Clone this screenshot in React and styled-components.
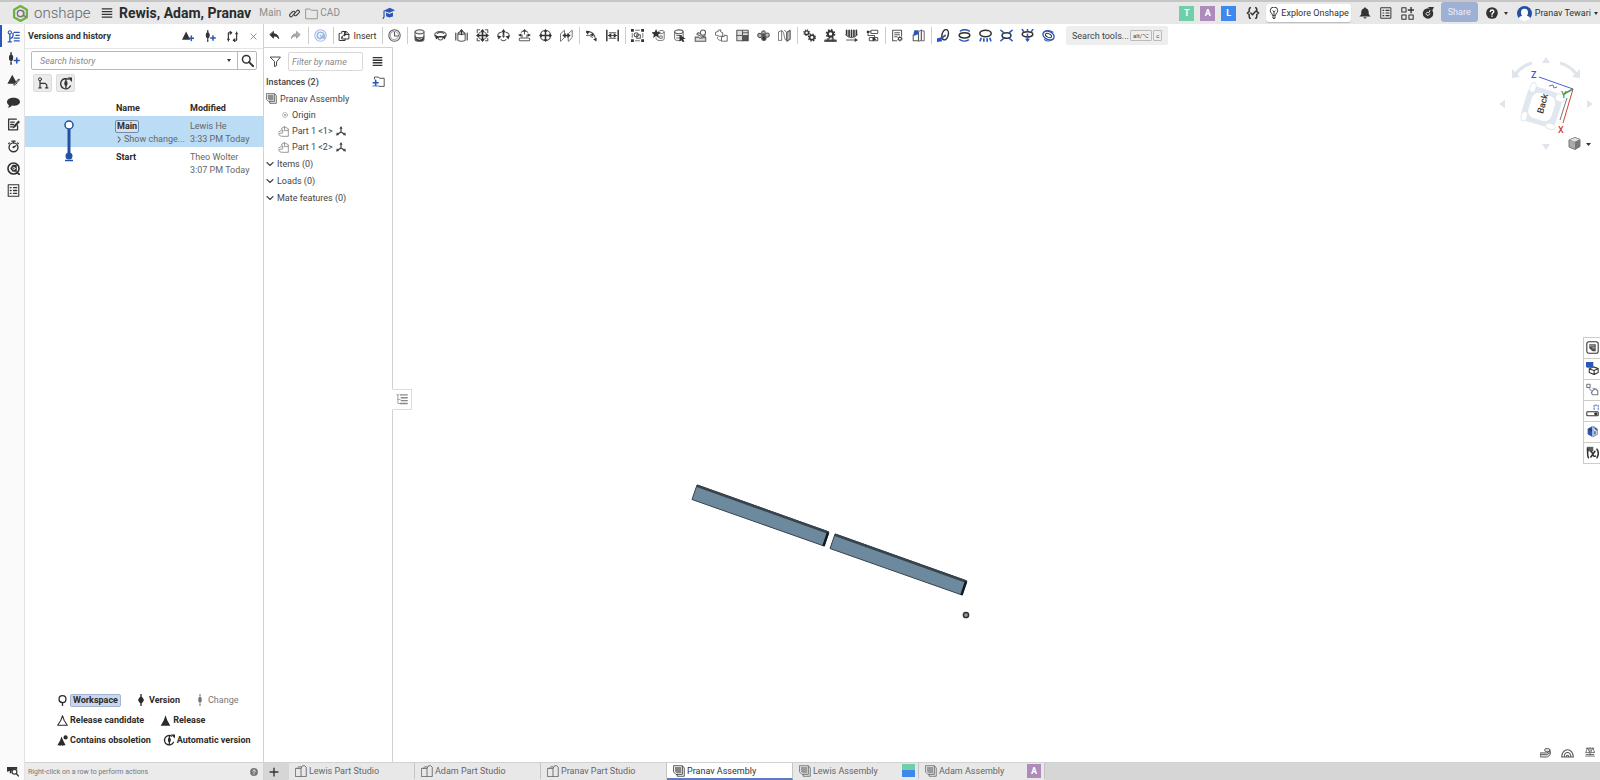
import React from "react";
import styled, { createGlobalStyle } from "styled-components";

const GlobalStyle = createGlobalStyle`
  * {
    box-sizing: border-box;
  }
  body {
    margin: 0;
    background: #fff;
    color: #333;
    font-family: Roboto, "Liberation Sans", sans-serif;
    font-size: 9px;
    line-height: 14px;
  }
  button, input {
    font: inherit;
    color: inherit;
  }
`;

/* ---------- icons ---------- */

const Glyph = styled.svg.attrs((props) => ({
  viewBox: props.viewBox || "0 0 16 16",
  "aria-hidden": true,
}))`
  flex: none;
  display: block;
  width: ${(props) => props.$size || 13}px;
  height: ${(props) => props.$size || 13}px;
  fill: none;
  stroke: currentColor;
  stroke-width: 1.3;
  stroke-linecap: round;
  stroke-linejoin: round;
  .f {
    fill: currentColor;
  }
  .s {
    fill: currentColor;
    stroke: none;
  }
  .b {
    stroke: #2a56b8;
  }
  .bf {
    fill: #2a56b8;
    stroke: none;
  }
  .g {
    fill: #bbb;
  }
  .d {
    stroke: currentColor;
  }
`;

const gear = (x, y, r) => (
  <g className="d">
    <circle cx={x} cy={y} r={r} strokeWidth={r * 0.7} />
    <circle cx={x} cy={y} r={r * 1.5} strokeWidth={r * 0.6} strokeLinecap="butt" strokeDasharray={`${r * 0.62} ${r * 0.56}`} />
  </g>
);

const icons = {
  undo: <path className="f" d="M6.500 2.500v3c4 0 7 2 7.500 7-1.500-3-4-3.600-7.500-3.600v3L1.500 7z" />,
  redo: <path d="M9.500 2.500v3c-4 0-7 2-7.500 7 1.500-3 4-3.600 7.500-3.600v3L14.500 7z" fill="#aaa" />,
  refresh: (
    <>
      <circle cx="8" cy="8" r="7" />
      <path d="M8 12a4 4 0 1 1 4-4M12.500 7v4h-4z" strokeWidth="2" />
      <circle cx="8" cy="8" r="1.200" className="s" />
    </>
  ),
  insert: (
    <>
      <path d="M3 4.500H1.500v9.500h8v-2M5 4.500V2h6l3.500 3.500V12H5V9" />
      <path d="M10.500 2v4h4M6 10c0-2.500 1-4 4-4" />
      <path className="s" d="M8 3.500L11.500 6 8 8.700zM7 1l4 1-2 3z" />
    </>
  ),
  clock: (
    <>
      <circle cx="8" cy="8" r="7" />
      <circle cx="8" cy="8" r="5" strokeWidth=".7" />
      <path d="M8 4v4.500h4" />
    </>
  ),
  fastened: (
    <>
      <path className="f" d="M2.500 8.500v4C2.500 16 13.500 16 13.500 12.500v-4c0 3.500-11 3.500-11 0z" />
      <path d="M2.500 3.500v5c0 3 11 3 11 0v-5" />
      <ellipse cx="8" cy="3.500" rx="5.500" ry="2.500" fill="#eee" />
      <path d="M5 11.500c2 1.500 4 1.500 6 0" stroke="#ccc" />
    </>
  ),
  revolute: (
    <>
      <path d="M1.500 9C-.5 5.500 3 3 8 3s8.500 2.500 6.500 6M4 5.500c2-1.500 6-1.500 8 0M5.500 10c-1 2 .5 3.500 2.500 3.500s3.500-1.500 2.500-3.500" />
      <path className="s" d="M1 7l5.500 2.500L2.500 13zM15 7L9.500 9.500l4 3.500zM6 8.500h4v2H6z" />
    </>
  ),
  slider: (
    <>
      <path d="M3.500 5.500v8.500c2 1.500 7 1.500 9 0V5.500M3.500 5.500c2 1.500 7 1.500 9 0M3.500 5.500c.5-1 1.500-1.500 3-1.700M12.500 5.500c-.5-1-1.500-1.500-3-1.700" />
      <path className="d" d="M1 5v8.500M15 5v8.500M8 2v5" />
      <path className="s" d="M8 0l3 3.500H5z" />
    </>
  ),
  planar: (
    <>
      <path className="d" d="M8 2v12M2 8h12" strokeWidth="2" />
      <path className="s" d="M8 0l3 4H5zM8 16l3-4H5zM0 8l4-3v6zM16 8l-4-3v6z" />
      <path d="M4.500 1h-3v3.500M11.500 1h3v3.500M1.500 11.500v3h3M14.500 11.500v3h-3M4 4.500h1M11 4.500h1M4 11.500h1M11 11.500h1" />
    </>
  ),
  cylindrical: (
    <>
      <path d="M1.500 9C0 6 3 4.500 5 4M14.500 9c1.500-3-1.500-4.500-3.500-5M5 13c2 2 4 2 6 0" />
      <path className="d" d="M8 3v4" strokeWidth="2" />
      <path className="s" d="M8 0l2.800 4h-5.600zM0 8l5.500 1L2 13zM16 8l-5.500 1 3.500 4zM6 8h4l-2 3z" />
    </>
  ),
  pinslot: (
    <>
      <rect x="1.500" y="11" width="13" height="3.500" rx="1.700" />
      <path d="M5 10V7.500H2.500M11 10V7.500h2.500M4 4c2-2.500 6-2.500 8 0M8 2v4" />
      <path className="s" d="M8 0l2.500 3h-5zM0 7.500l4-2v4zM16 7.500l-4-2v4z" />
    </>
  ),
  ball: (
    <>
      <circle cx="8" cy="8" r="6.500" />
      <path className="d" d="M8 2v12M2 8h12" strokeWidth="1.800" />
      <path className="s" d="M8 0l2.500 3.500h-5zM8 16l2.500-3.500h-5zM0 8l3.500-2.500v5zM16 8l-3.500-2.500v5z" />
    </>
  ),
  parallel: (
    <>
      <path d="M1 5.500l4.500-4v9L1 15zM10.500 5.500l4.500-4v9L10.500 15z" strokeWidth="1" />
      <path className="d" d="M4 8h8" strokeWidth="1.800" />
      <path className="s" d="M3.500 8L7 5v6zM12.500 8L9 5v6z" />
    </>
  ),
  tangent: (
    <>
      <path d="M2 4.500c4-2.500 10 0 11 9M2 8c3-1 5 0 7 2.500" />
      <path className="s" d="M1 2l5 .5L3 7zM14 15.500l-4-3 4.500-1.500zM6 7l4-2 .5 4.500z" />
    </>
  ),
  width: (
    <>
      <path className="d" d="M1 1.500v13M15 1.500v13" strokeWidth="1.800" />
      <path d="M3 8h10M4 4.500h8M4 11.500h8" />
      <path className="s" d="M2.500 8L6.500 5v6zM13.500 8l-4-3v6z" />
    </>
  ),
  group: (
    <>
      <path className="s" d="M0 0h3.500v3.500H0zM12.500 0H16v3.500h-3.500zM0 12.500h3.500V16H0zM12.500 12.500H16V16h-3.500z" />
      <path d="M5.500 1.500h5M5.500 14.500h5M1.500 5.500v5M14.500 5.500v5" strokeWidth="1" />
      <circle cx="6.500" cy="7" r="2.500" />
      <rect x="7" y="7" width="4.500" height="4.500" />
    </>
  ),
  connector: (
    <>
      <path d="M8 3c2-2 7-1.500 7 .5v8.500c0 3-9 3-10 0v-1M9 5.500c2 .5 5 .5 6-1.500M10 8.500h2.500v3H10z" strokeWidth="1" />
      <path className="s" d="M5 0l1.700 3.700 4.300.3-3.300 2.700 1 4.300L5 8.700 1.300 11l1-4.300L-1 4l4.300-.3z" />
    </>
  ),
  pick: (
    <>
      <path d="M2 3.500v8.500c0 3 10.500 3 10.500 0V3.500M4.500 8h6M4.500 11h4" strokeWidth="1.100" />
      <ellipse cx="7.200" cy="3.500" rx="5.200" ry="2.400" />
      <path className="s" d="M8 7l7.500 5-3.200.6L14 15.500l-1.800 1-1.700-3L8 15.500z" />
    </>
  ),
  sketch: (
    <>
      <path d="M1.500 10h4l2 1.500 7-1v4.500h-13z" fill="#ddd" />
      <circle cx="11" cy="4.500" r="3.200" />
      <path d="M8 8.500L3.500 6.500 5 4.500l3 1M9 10l5-1.500" />
    </>
  ),
  replicate: (
    <>
      <path d="M1 4l3-1V1.500L7 1v2.500l2.500 1v4.500h-4L1 7.500zM8.500 9.500l3-.5V7.500l3.500.5v7H8.500z" strokeWidth="1.100" />
      <path d="M3 10.500c0 2 1 3.500 4 3.500" strokeWidth="1" />
    </>
  ),
  table: (
    <>
      <rect x="1" y="1.500" width="14" height="13" fill="#ddd" />
      <rect className="s" x="8" y="8" width="7" height="6.500" opacity=".8" />
      <path d="M1 8h14M8 1.500v13M8 4.700h7" />
    </>
  ),
  pattern: (
    <>
      <circle cx="8" cy="4.500" r="2.200" className="g" />
      <circle cx="3.500" cy="8" r="2.600" className="g" />
      <circle cx="12.500" cy="7.500" r="2.600" className="g" />
      <circle cx="8.500" cy="11.500" r="2.600" className="f" />
      <circle cx="8" cy="7.500" r="1.500" className="f" />
    </>
  ),
  mirror: (
    <>
      <path d="M1 3.500l3.500-1.500v12H1zM4.500 2c4 0 2.500 12.500 6 12V4.500L8 1.500" strokeWidth="1" />
      <path d="M11 4l4-2.500v11L11 15z" className="g" />
    </>
  ),
  gears: (
    <>
      {gear(4.500, 4.500, 2.300)}
      {gear(11, 10.500, 2.800)}
    </>
  ),
  rack: (
    <>
      {gear(8, 6, 3.300)}
      <path d="M1 15.500V13.500h3V12h2v1.500h4V12h2v1.500h3v2z" className="f" />
    </>
  ),
  screw: (
    <>
      <path className="d" d="M2 1.500v6M5 1.500v8M8 1.500v8M11 1.500v8M14 1.500v6" strokeWidth="2" />
      <path d="M1 7c4 5 10 5 14 0M2 13.500h11" />
      <path className="s" d="M16 13.500L12 11v5z" />
    </>
  ),
  linear: (
    <>
      <rect x="6" y="1.500" width="8.500" height="4" rx="1" />
      <rect x="4" y="10.500" width="10.500" height="4" rx="1" />
      <path d="M6 3.500H2.500v4.500h8v4" />
      <path className="s" d="M8 10l5 2.500-5 2.500zM1 2h3v3H1z" />
    </>
  ),
  note: (
    <>
      <path d="M7 14.500H2v-13h11v7M4.500 4.500h6M4.500 7h6M4.500 9.500h3" />
      {gear(11, 12, 1.800)}
    </>
  ),
  bom: (
    <>
      <path d="M8.500 3l3-2v13l-3 1zM12 2l3 .5v12h-3z" strokeWidth="1.100" />
      <path d="M1.500 7v7.500H8V6" />
      <path className="bf" d="M3 1.500h5v5L5 7.500 2 9V5z" />
    </>
  ),
  view1: (
    <>
      <ellipse className="d" cx="10" cy="7" rx="3.800" ry="6.500" transform="rotate(15 10 7)" strokeWidth="1.800" />
      <path className="b" d="M2 13.500l8-5.500" strokeWidth="2.200" />
      <path className="bf" d="M0 11.500l5-1 1.500 4.500L0 16z" />
    </>
  ),
  view2: (
    <>
      <ellipse className="d" cx="8" cy="7.800" rx="6.500" ry="3.200" strokeWidth="2" />
      <path className="b" d="M3 2.500c3-2.500 8-2 11 0M2 13c3 2.500 8 2.500 11 .5" strokeWidth="1.800" />
    </>
  ),
  view3: (
    <>
      <ellipse className="d" cx="8" cy="5.500" rx="7" ry="4" strokeWidth="1.900" />
      <path className="b" d="M2.500 11.500l-1 3M6 12v3M10 12v3M13.500 11.500l1 3" strokeWidth="2" />
    </>
  ),
  view4: (
    <>
      <ellipse className="d" cx="8" cy="8" rx="5.500" ry="3.500" strokeWidth="1.900" />
      <path className="b" d="M1 1.500l3.500 3M15 1.500l-3.500 3M1 14.500l3.500-3M15 14.500l-3.500-3" strokeWidth="1.900" />
    </>
  ),
  view5: (
    <>
      <ellipse className="d" cx="8" cy="6.500" rx="6.500" ry="3.200" strokeWidth="1.900" />
      <path className="b" d="M8 6.500V14M3 3L1.500.5M8 2.500V.5M13 3L14.500.5" strokeWidth="1.900" />
      <path className="bf" d="M8 16l3-4H5z" />
    </>
  ),
  view6: (
    <>
      <ellipse className="b" cx="8" cy="8" rx="7.200" ry="5" transform="rotate(25 8 8)" strokeWidth="1.600" />
      <ellipse className="d" cx="8" cy="8" rx="4" ry="2.200" transform="rotate(25 8 8)" />
      <path className="b" d="M1.500 5c2-4 8-4 12-1M3 13c3 2.500 8 2.500 11.500-1" />
    </>
  ),
  history: (
    <>
      <circle cx="3.500" cy="3" r="2" />
      <path d="M3.500 5v9M3.500 10c3 0 4-1 4-4M7.500 6V4M1.500 14.500h4M9 3h6M11 6.500h4M9 10h6M9 13.500h6" strokeWidth="1.600" />
    </>
  ),
  versionAdd: (
    <>
      <path d="M5 1v14" strokeWidth="1.800" strokeDasharray="2 2" />
      <ellipse className="s" cx="5" cy="7" rx="2.600" ry="4" />
      <path className="b" d="M12 7.500v6M9 10.500h6" strokeWidth="2" />
    </>
  ),
  changes: (
    <>
      <path className="s" d="M6.500 1l6 11h-12z" />
      <path d="M9 13l5.500-6" strokeWidth="2.400" />
      <path d="M9.300 12.700l5-5.500" stroke="#fff" strokeWidth=".8" />
    </>
  ),
  comment: <path className="s" d="M8 2c4.500 0 8 2 8 5s-3.500 5-8 5l-2-.2C5 13.500 3 14.500 1 14.500c1-1 1.500-2 1.200-3.300C.8 10.200 0 8.700 0 7c0-3 3.500-5 8-5z" />,
  edit: (
    <>
      <path d="M13 9.500v5H2v-13h9.500M4.500 5H9M4.500 8h3.500M4.500 11H7" strokeWidth="1.600" />
      <path className="s" d="M14 3l2 2-6 6.500L7 13l1-3.500z" />
    </>
  ),
  stopwatch: (
    <>
      <circle cx="8" cy="9" r="5.500" strokeWidth="1.700" />
      <path d="M6 1.500h4M8 1.500v2M13 3.500l1 1M8.500 8.500L11 7M3 3.500l-1 1" strokeWidth="1.600" />
      <circle className="s" cx="8" cy="9" r="1.300" />
    </>
  ),
  target: (
    <>
      <circle cx="8" cy="8" r="6.800" strokeWidth="2" />
      <path className="s" d="M4 8l3-4.500h5V12H7z" />
      <circle cx="8.500" cy="8" r="1.500" stroke="#fff" strokeWidth=".9" />
      <path d="M12 13l3 2" strokeWidth="2.200" />
    </>
  ),
  list: (
    <>
      <rect x="1.500" y="1" width="13" height="14" />
      <path d="M4 4.500h1M8 4.500h4M4 8h1M8 8h4M4 11.500h1M8 11.500h4" strokeWidth="1.600" />
    </>
  ),
  feedback: (
    <>
      <path className="s" d="M0 2.500h13.500v4A4.500 4.500 0 0 0 6 11H3.500L4 8 0 9z" />
      <circle cx="10" cy="9" r="3.200" fill="#fff" strokeWidth="1.500" />
      <path d="M12.500 11.500l2.500 3" strokeWidth="2" />
    </>
  ),
  releaseAdd: (
    <>
      <path className="s" d="M5.500 2l5.500 11H0z" />
      <path className="b" d="M12.500 8v6M9.500 11h6" strokeWidth="2" />
    </>
  ),
  compare: (
    <path d="M6.500 2.500H2v9.500M.5 12h3M9.500 13.500H14V4M12.500 4h3M4.500.8l2.300 1.700-2.300 2M11.500 11.500l-2.300 2 2.300 1.800M2 12v2.500M14 4V1.500" strokeWidth="1.700" />
  ),
  close: <path d="M2 2l12 12M14 2L2 14" strokeWidth="1.600" />,
  search: (
    <>
      <circle cx="6.500" cy="6.500" r="4.700" strokeWidth="1.800" />
      <path d="M10 10l5 5" strokeWidth="2.400" />
    </>
  ),
  branch: (
    <>
      <circle cx="4" cy="3" r="2" />
      <path d="M4 5v9.500M4 8.500h7l2 2v4M2.500 14.500h3M11.500 14.500h3" strokeWidth="1.600" />
    </>
  ),
  auto: (
    <>
      <path d="M14 11A6.300 6.300 0 1 1 11.500 2.800M8.500 3v10" strokeWidth="1.700" />
      <ellipse className="s" cx="8.500" cy="8" rx="2" ry="3" />
      <path className="s" d="M10.500.5H16V6z" />
    </>
  ),
  workspace: (
    <>
      <circle cx="8" cy="6" r="5" strokeWidth="1.900" />
      <path d="M8 11v5" strokeWidth="1.900" />
    </>
  ),
  version: (
    <>
      <path d="M8 0v16" strokeWidth="1.800" />
      <path className="s" d="M8 3l4 5-4 5-4-5z" />
      <ellipse className="s" cx="8" cy="8" rx="3.200" ry="4" />
    </>
  ),
  change: (
    <>
      <path d="M8 0v2.500M8 13v3" strokeWidth="1.500" />
      <ellipse className="s" cx="8" cy="7.500" rx="2.400" ry="4" />
    </>
  ),
  candidate: <path d="M8 1l2.500 7 4.500 7H1l4.500-7z" strokeWidth="1.500" />,
  release: <path className="s" d="M8 .5l2.500 7 4.500 8H1l4.500-8z" />,
  obsolete: (
    <>
      <path className="s" d="M6.500 2l2.500 6 3.500 7h-12l4-7z" />
      <circle className="s" cx="12.500" cy="3.500" r="3" />
      <path d="M4.500 14.500V16M8.500 14.500V16" />
    </>
  ),
  filter: <path d="M.8 1.500h14.400L9.500 8.500v5.500L6.500 15.500v-7z" />,
  lines: <path d="M1 2.500h14M1 6.200h14M1 9.800h14M1 13.500h14" strokeWidth="1.900" strokeLinecap="butt" />,
  folderAdd: (
    <>
      <path d="M3 5V2.500h5l1 1.500h6v10H9" strokeWidth="1.100" />
      <path className="b" d="M4.500 6.500v6M1.500 9.500h6" strokeWidth="2" />
      <path className="b" d="M1 13.500h7" strokeWidth="1" />
    </>
  ),
  assembly: (
    <>
      <path d="M5.500 12.500v2.500h9.500V4l-2-2.500" strokeWidth="1.100" />
      <path d="M1 1h11.500v11.500H4L1 9.500z" strokeWidth="1.100" />
      <path className="s" d="M2.500 2.500h8.500v8.500h-6l-2.500-2.500z" opacity=".6" />
    </>
  ),
  origin: (
    <>
      <circle cx="8" cy="8" r="5" stroke="#999" />
      <circle cx="8" cy="8" r="2" fill="#999" stroke="none" />
    </>
  ),
  part: (
    <g stroke="#777">
      <path d="M5.500 6.500V3l4-2L15 4v11H6.500C3 15 1 13.500 1 11l6-1V6.500z" strokeWidth="1.100" />
      <path d="M9.500 1v5.500h5M1 8.500L4 7" strokeWidth="1.100" />
    </g>
  ),
  mate: (
    <>
      <path d="M8 3v6.500L2.500 13M8 9.500l5.500 3.500" strokeWidth="2" />
      <path className="s" d="M8 0l2.500 4.500h-5zM0 15l1.500-5 3.500 4.500zM16 15l-1.500-5-3.500 4.500z" />
    </>
  ),
  chevron: <path d="M2 5l6 6 6-6" strokeWidth="2.200" />,
  chevronRight: <path d="M5 2l5 6-5 6" strokeWidth="2.400" />,
  link: <path d="M7 9.500L11.500 4c2-2 5 1 3 3L11 10.500c-1 1-2.500 1-3 .3M9 6.500L4.500 12c-2 2-5-1-3-3L5 5.500c1-1 2.500-1 3-.3" strokeWidth="1.700" />,
  folder: <path d="M.8 14V2.500h5L7.500 4H15.200v10z" strokeWidth="1.100" />,
  cap: (
    <>
      <path className="s" d="M9.500 1L16 4 9 7 2 4.500z" />
      <path className="s" d="M5 6.700L9 8.500l4.500-1.800v5L9 13l-4-1.500z" />
      <path d="M2.500 5v7l-1 2" strokeWidth="1.500" />
    </>
  ),
  check: <path d="M5 2C3 2 4 5 3.500 6.500L1.500 8l2 1.500C4 11 3 14 5 14M11 2c2 0 1 3 1.500 4.500l2 1.500-2 1.500c-.5 1.500.5 4.500-1.500 4.500M5.500 8L7.500 10 11 6" strokeWidth="1.700" />,
  bulb: <path d="M6 11c0-3-3-3-3-6a5 5 0 0 1 10 0c0 3-3 3-3 6zM6 13.500h4M7 15.500h2M8 11V6M6.500 5l1.500 1.500L9.500 5" />,
  bell: <path className="s" d="M8 .5c1 0 1.500.7 1.500 1.500 3.500 1 3.500 4 3.500 6.500 0 2 1.500 2.500 2.500 4H.5C1.500 11 3 10.500 3 8.500 3 6 3 3 6.500 2 6.500 1.200 7 .5 8 .5zM6 13.500h4c0 2.500-4 2.500-4 0z" />,
  apps: (
    <>
      <rect x="1" y="1" width="5.200" height="5.200" />
      <rect x="1" y="9.800" width="5.200" height="5.200" />
      <rect x="9.800" y="9.800" width="5.200" height="5.200" />
      <path d="M12.400.5v6.500M9 3.700h6.800" strokeWidth="1.700" />
    </>
  ),
  globe: (
    <>
      <circle className="s" cx="8" cy="8.500" r="7" />
      <path d="M6 10.500c-2-2 1-5 3-3M9.500 7L11 4M7 11c1.500.5 3-.5 3.500-2" stroke="#fff" strokeWidth="1.200" />
      <path className="s" d="M8 0h8l-3 6z" />
    </>
  ),
  help: (
    <>
      <circle className="s" cx="8" cy="8" r="7.800" />
      <path d="M5.700 6.200C6 3.300 10.500 3.500 10.300 6.300 10.200 8 8 8 8 9.700M8 12v.3" stroke="#fff" strokeWidth="1.900" />
    </>
  ),
  studio: (
    <>
      <path d="M1 4.500h7v11H1zM3 4.500L5 2.500h3" strokeWidth="1.200" />
      <path d="M8 4.500l2-3.500h3l2 2v12.500H8" strokeWidth="1.200" />
    </>
  ),
  plus: <path d="M8 1v14M1 8h14" strokeWidth="2.200" strokeLinecap="butt" />,
  tree: (
    <>
      <path d="M2.500 3v11h3M2.500 8.500h3M1 1.500l1.500 2 1.500-2" strokeWidth="1" />
      <path d="M6 2.500h9M7 6.300h8M7 10.200h8M6 14h9" strokeWidth="1.800" />
    </>
  ),
  props: (
    <>
      <rect x="1" y="1" width="14" height="14" rx="2.500" />
      <path className="s" d="M4 4h8v8.500H8L4 9z" opacity=".85" />
      <path d="M5 6h5M8 8.500h3" stroke="#fff" strokeWidth=".7" />
    </>
  ),
  appearance: (
    <>
      <path d="M4 8.500l5-2.500 6 2v5l-5 2.500-6-2.500zM4 8.500l6 2 5-2.500M10 10.500v5" />
      <path className="bf" d="M0 0h9v5.500L6.500 7H2L0 6z" />
    </>
  ),
  config: (
    <>
      <path d="M1 1.500h4v4H1zM9 8.500l3-1 2.500 2v5H8l-1.500-2.500z" strokeWidth="1.300" stroke="#777" />
      <path d="M4 7l4 4M8.500 6.500l4 1" stroke="#7d9bd0" />
    </>
  ),
  measure: (
    <>
      <rect x="1" y="9.500" width="14" height="5" rx="1" />
      <circle className="s" cx="12" cy="12" r="2" />
      <path className="b" d="M10 7V1.500h5V8" strokeWidth="1" strokeDasharray="2 1.500" />
    </>
  ),
  section: (
    <>
      <path className="bf" d="M7.500 1.500L2 4.500v7l5.500 3z" />
      <path d="M8.500 1.500L14 5v6.500l-5.500 3z" stroke="#7d9bd0" fill="#cfdcf3" />
      <path d="M4 5l3 2M11 4l2 2M11 8v3" />
    </>
  ),
  variable: (
    <>
      <path d="M2 3v6c0 3 0 4 1 5.500M13.500 4c2 3 2 7 0 10.500M6 13.500l5-7M6 7c2-1 2 7 5.500 5.500" strokeWidth="1.900" />
      <path className="s" d="M1 1h8v5.500H1z" opacity=".8" />
    </>
  ),
  mass: (
    <>
      <path d="M1 8.500h8.500L15 6v5l-4 3.500H1z" fill="#ddd" />
      <path d="M1 11h9l5-3" />
      <ellipse cx="10.500" cy="4.500" rx="4" ry="2.500" fill="#ddd" />
    </>
  ),
  protractor: (
    <>
      <path d="M.8 13.500a7.200 9 0 0 1 14.400 0z" />
      <path d="M4 13a4 5 0 0 1 8 0M6.500 13a1.500 1.500 0 0 1 3 0" />
    </>
  ),
  scale: <path d="M2 2h12M8 1v12M4 2L1 9h6zM12 2L9 9h6zM1 14.500h14M2 12h12" strokeWidth="1.300" />,
};

const Icon = ({ name, size }) => <Glyph $size={size}>{icons[name]}</Glyph>;

/* ---------- shared parts ---------- */

const IconButton = styled.button`
  display: flex;
  flex: none;
  align-items: center;
  justify-content: center;
  width: ${(props) => props.$w || 21}px;
  height: ${(props) => props.$h || 20}px;
  padding: 0;
  border: 0;
  background: none;
  color: ${(props) => props.$color || "#333"};
  cursor: pointer;
`;

const Caret = styled.span`
  flex: none;
  border: 2px solid transparent;
  border-top: 3px solid #333;
  border-bottom: 0;
`;

const Page = styled.div`
  display: flex;
  flex-direction: column;
  height: 100vh;
  overflow: hidden;
`;

const Body = styled.div`
  display: flex;
  flex: 1;
  min-height: 0;
`;

/* ---------- header ---------- */

const TopBar = styled.header`
  display: flex;
  align-items: center;
  height: 24px;
  padding: 0 2px 0 12px;
  border-top: 2px solid #c6c6c6;
  background: #e8e8e8;
`;

const Logo = styled.a`
  display: flex;
  align-items: center;
  gap: 5px;
  width: 86px;
  color: #666;
  font-size: 15px;
  line-height: 20px;
  font-weight: 300;
  text-decoration: none;
`;

const DocTitle = styled.h1`
  margin: 0 8px 0 4px;
  font-size: 14px;
  line-height: 20px;
  font-weight: 700;
  color: #2b2b2b;
`;

const Crumb = styled.span`
  display: flex;
  align-items: center;
  gap: 2px;
  margin-right: ${(props) => props.$after || 0}px;
  color: ${(props) => props.$color || "#8e8e8e"};
  font-size: 10px;
`;

const TopRight = styled.div`
  display: flex;
  align-items: center;
  margin-left: auto;
`;

const UserBadge = styled.span`
  width: ${(props) => props.$size || 15}px;
  height: ${(props) => props.$size || 15}px;
  margin-right: ${(props) => (props.$size ? 0 : 6)}px;
  background: ${(props) => props.$bg};
  color: #fff;
  font-weight: 700;
  line-height: ${(props) => props.$size || 15}px;
  text-align: center;
`;

const Explore = styled.button`
  display: flex;
  align-items: center;
  gap: 1px;
  height: 18px;
  margin: 0 4px 0 2px;
  padding: 0 2px;
  border: 0;
  border-radius: 3px;
  background: #fff;
  box-shadow: 0 1px 1px #bbb;
  white-space: nowrap;
`;

const ShareButton = styled.button`
  width: 37px;
  height: 20px;
  margin: 0 2px 2px;
  padding: 0;
  border: 0;
  border-radius: 3px;
  background: #9fb0d5;
  color: #e9eef8;
`;

const Account = styled.button`
  display: flex;
  align-items: center;
  gap: 3px;
  margin-left: 9px;
  padding: 0;
  border: 0;
  background: none;
  white-space: nowrap;
`;

const Header = () => (
  <TopBar>
    <Logo href="#home">
      <Glyph $size={17}>
        <path d="M8 1l6 3.500v7L8 15l-6-3.500v-7z" stroke="#6cb33f" strokeWidth="2.200" />
        <circle cx="8" cy="8" r="3" stroke="#777" />
        <path d="M11 6v4l2 1" stroke="#777" />
      </Glyph>
      onshape
    </Logo>
    <IconButton aria-label="Menu" $w={17}>
      <Icon name="lines" size={12} />
    </IconButton>
    <DocTitle>Rewis, Adam, Pranav</DocTitle>
    <Crumb $after={8}>Main</Crumb>
    <Crumb $after={5} $color="#444">
      <Icon name="link" size={11} />
    </Crumb>
    <Crumb $after={38}>
      <Icon name="folder" size={13} />
      CAD
    </Crumb>
    <IconButton aria-label="Learning" $color="#2a56b8">
      <Icon name="cap" size={13} />
    </IconButton>
    <TopRight>
      <UserBadge $bg="#6fcfa8">T</UserBadge>
      <UserBadge $bg="#ad8cbb">A</UserBadge>
      <UserBadge $bg="#3f88ec">L</UserBadge>
      <IconButton aria-label="Checks" $w={22}>
        <Icon name="check" size={14} />
      </IconButton>
      <Explore>
        <Icon name="bulb" size={12} />
        Explore Onshape
      </Explore>
      <IconButton aria-label="Notifications">
        <Icon name="bell" size={12} />
      </IconButton>
      <IconButton aria-label="Tasks">
        <Icon name="list" size={12} />
      </IconButton>
      <IconButton aria-label="Apps">
        <Icon name="apps" size={13} />
      </IconButton>
      <IconButton aria-label="Community">
        <Icon name="globe" size={12} />
      </IconButton>
      <ShareButton>Share</ShareButton>
      <IconButton aria-label="Help" $w={24}>
        <Icon name="help" size={12} />
      </IconButton>
      <Caret />
      <Account>
        <Glyph $size={15}>
          <circle cx="8" cy="8" r="8" fill="#2450a4" stroke="none" />
          <path d="M8 3c5 0 4 6 2.500 7.500 2 .5 3.500 1.500 3.500 3a8 8 0 0 1-12 0c0-1.500 1.500-2.500 3.500-3C4 9 3 3 8 3z" fill="#fff" stroke="none" />
        </Glyph>
        Pranav Tewari
        <Caret />
      </Account>
    </TopRight>
  </TopBar>
);

/* ---------- left rail ---------- */

const Rail = styled.nav`
  display: flex;
  flex: none;
  flex-direction: column;
  width: 25px;
  padding-top: 1px;
  border-right: 1px solid #e2e2e2;
  background: #fafafa;
`;

const RailButton = styled(IconButton)`
  width: 24px;
  height: 22px;
  border-left: 2px solid ${(props) => (props.$active ? "#2a56b8" : "transparent")};
  color: ${(props) => (props.$active ? "#2a56b8" : "#333")};
  &:last-child {
    height: 18px;
    margin-top: auto;
  }
`;

const railItems = [
  ["history", "Versions and history"],
  ["versionAdd", "Create version"],
  ["changes", "Changes"],
  ["comment", "Comments"],
  ["edit", "Notes"],
  ["stopwatch", "Performance"],
  ["target", "Search"],
  ["list", "Tasks"],
];

/* ---------- history panel ---------- */

const Panel = styled.aside`
  display: flex;
  flex: none;
  flex-direction: column;
  width: 239px;
  border-right: 1px solid #d2d2d2;
`;

const PanelHead = styled.div`
  display: flex;
  align-items: center;
  height: 25px;
  padding: 0 0 0 3px;
  border-bottom: 1px solid #e6e6e6;
  h2 {
    flex: 1;
    margin: 0;
    font-size: 9px;
  }
`;

const SearchRow = styled.div`
  display: flex;
  align-items: center;
  height: 19px;
  margin: 2px 6px 0;
  border: 1px solid #b9b9b9;
  border-radius: 2px;
`;

const SearchInput = styled.input`
  flex: 1;
  min-width: 0;
  height: 17px;
  padding: 0 8px;
  border: 0;
  outline: 0;
  background: none;
  font-style: italic;
  &::placeholder {
    color: #888;
    opacity: 1;
  }
`;

const SearchButton = styled(IconButton)`
  width: 19px;
  height: 17px;
  margin-left: 6px;
  border-left: 1px solid #b9b9b9;
`;

const Toggles = styled.div`
  display: flex;
  gap: 4px;
  padding: 4px 8px 9px;
`;

const Toggle = styled(IconButton)`
  width: 19px;
  height: 18px;
  border: 1px solid #dcdcdc;
  border-radius: 2px;
  background: #ebebeb;
`;

const HistoryTable = styled.table`
  width: 100%;
  table-layout: fixed;
  border-collapse: collapse;
  th,
  td {
    padding: 0;
    text-align: left;
    vertical-align: top;
    white-space: nowrap;
  }
  th {
    height: 15px;
    color: #2b2b2b;
  }
  td {
    height: 31px;
    padding-top: 4px;
    line-height: 13px;
    color: #666;
  }
  tr[aria-selected="true"] td {
    background: #bbdcf5;
  }
  td:first-child {
    padding-top: 0;
  }
`;

const BranchLine = styled.svg`
  display: block;
  width: 91px;
  height: 31px;
  overflow: visible;
`;

const VersionName = styled.div`
  height: 13px;
  font-weight: 700;
  color: #2b2b2b;
`;

const Chip = styled.span`
  display: inline-block;
  height: 13px;
  margin-left: ${(props) => (props.$blue ? 0 : -1)}px;
  padding: 0 ${(props) => (props.$blue ? 2 : 1)}px;
  border: 1px solid ${(props) => (props.$blue ? "#a3b4d2" : "#7789a8")};
  border-radius: 2px;
  background: ${(props) => (props.$blue ? "#cbd6ea" : "#d5dff0")};
  line-height: 11px;
`;

const ShowChanges = styled.button`
  display: flex;
  align-items: center;
  gap: 1px;
  padding: 0;
  border: 0;
  background: none;
  color: #666;
  line-height: 13px;
`;

const Legend = styled.div`
  display: grid;
  gap: 6px;
  margin-top: auto;
  padding: 0 0 15px 32px;
  color: #2b2b2b;
`;

const LegendRow = styled.div`
  display: flex;
  gap: ${(props) => props.$gap}px;
`;

const LegendItem = styled.span`
  display: flex;
  align-items: center;
  gap: 2px;
  white-space: nowrap;
  font-weight: ${(props) => (props.$light ? 400 : 700)};
  color: ${(props) => (props.$light ? "#777" : "#2b2b2b")};
`;

const PanelFoot = styled.footer`
  display: flex;
  align-items: center;
  justify-content: space-between;
  height: 18px;
  padding: 0 5px 0 3px;
  border-top: 1px solid #d2d2d2;
  background: #ebebeb;
  color: #777;
  font-size: 7px;
`;

const HistoryPanel = () => (
  <Panel>
    <PanelHead>
      <h2>Versions and history</h2>
      <IconButton aria-label="Create release" $w={22}>
        <Icon name="releaseAdd" size={12} />
      </IconButton>
      <IconButton aria-label="Create version" $w={22}>
        <Icon name="versionAdd" size={12} />
      </IconButton>
      <IconButton aria-label="Compare" $w={22}>
        <Icon name="compare" size={11} />
      </IconButton>
      <IconButton aria-label="Close" $w={20} $color="#666">
        <Icon name="close" size={7} />
      </IconButton>
    </PanelHead>
    <SearchRow>
      <SearchInput aria-label="Search history" placeholder="Search history" />
      <Caret />
      <SearchButton aria-label="Search">
        <Icon name="search" size={13} />
      </SearchButton>
    </SearchRow>
    <Toggles>
      <Toggle aria-label="Show branches">
        <Icon name="branch" size={12} />
      </Toggle>
      <Toggle aria-label="Show automatic versions">
        <Icon name="auto" size={13} />
      </Toggle>
    </Toggles>
    <HistoryTable>
      <colgroup>
        <col width="91" />
        <col width="74" />
        <col />
      </colgroup>
      <thead>
        <tr>
          <th aria-label="Graph" />
          <th>Name</th>
          <th>Modified</th>
        </tr>
      </thead>
      <tbody>
        <tr aria-selected="true">
          <td>
            <BranchLine aria-hidden="true">
              <path d="M44 9v32" stroke="#2450a4" strokeWidth="3" />
              <circle cx="44" cy="9" r="4" fill="#fff" stroke="#2450a4" strokeWidth="1.500" />
              <circle cx="44" cy="40" r="3.500" fill="#2450a4" />
              <path d="M40 44.500h8" stroke="#2450a4" strokeWidth="1.500" />
            </BranchLine>
          </td>
          <td>
            <VersionName>
              <Chip>Main</Chip>
            </VersionName>
            <ShowChanges>
              <Icon name="chevronRight" size={7} />
              Show change...
            </ShowChanges>
          </td>
          <td>
            Lewis He
            <br />
            3:33 PM Today
          </td>
        </tr>
        <tr>
          <td />
          <td>
            <VersionName>Start</VersionName>
          </td>
          <td>
            Theo Wolter
            <br />
            3:07 PM Today
          </td>
        </tr>
      </tbody>
    </HistoryTable>
    <Legend>
      <LegendRow $gap={14}>
        <LegendItem>
          <Icon name="workspace" size={11} />
          <Chip $blue>Workspace</Chip>
        </LegendItem>
        <LegendItem>
          <Icon name="version" size={12} />
          Version
        </LegendItem>
        <LegendItem $light>
          <Icon name="change" size={12} />
          Change
        </LegendItem>
      </LegendRow>
      <LegendRow $gap={16}>
        <LegendItem>
          <Icon name="candidate" size={11} />
          Release candidate
        </LegendItem>
        <LegendItem>
          <Icon name="release" size={11} />
          Release
        </LegendItem>
      </LegendRow>
      <LegendRow $gap={12}>
        <LegendItem>
          <Icon name="obsolete" size={11} />
          Contains obsoletion
        </LegendItem>
        <LegendItem>
          <Icon name="auto" size={12} />
          Automatic version
        </LegendItem>
      </LegendRow>
    </Legend>
    <PanelFoot>
      Right-click on a row to perform actions
      <Icon name="help" size={8} />
    </PanelFoot>
  </Panel>
);

/* ---------- toolbar ---------- */

const Main = styled.main`
  display: flex;
  flex: 1;
  flex-direction: column;
  min-width: 0;
`;

const Tools = styled.div`
  display: flex;
  flex: none;
  align-items: center;
  height: 23px;
`;

const ToolButton = styled(IconButton)`
  ${Glyph} {
    stroke: #5a5a5a;
  }
`;

const Divider = styled.span`
  flex: none;
  width: 1px;
  height: 17px;
  margin: 0 1px 0 2px;
  background: #ccc;
`;

const InsertButton = styled(IconButton)`
  gap: 3px;
  width: 45px;
`;

const ToolSearch = styled.button`
  display: flex;
  align-items: center;
  gap: 1px;
  height: 19px;
  margin-left: 7px;
  padding: 0 6px;
  border: 0;
  border-radius: 2px;
  background: #eee;
  color: #444;
  white-space: nowrap;
`;

const Key = styled.kbd`
  padding: 0 2px;
  border: 1px solid #bbb;
  border-radius: 1px;
  font-family: inherit;
  font-size: 6px;
  line-height: 9px;
`;

const toolGroups = [
  ["fastened", "revolute", "slider", "planar", "cylindrical", "pinslot", "ball", "parallel"],
  ["tangent", "width"],
  ["group", "connector", "pick", "sketch", "replicate", "table", "pattern", "mirror"],
  ["gears", "rack", "screw", "linear"],
  ["note", "bom"],
  ["view1", "view2", "view3", "view4", "view5", "view6"],
];

const Toolbar = () => (
  <Tools role="toolbar">
    <IconButton aria-label="Undo">
      <Icon name="undo" size={11} />
    </IconButton>
    <IconButton aria-label="Redo" $color="#999">
      <Icon name="redo" size={11} />
    </IconButton>
    <Divider />
    <IconButton aria-label="Update" $color="#9db9e2">
      <Icon name="refresh" size={13} />
    </IconButton>
    <Divider />
    <InsertButton>
      <Icon name="insert" size={12} />
      Insert
    </InsertButton>
    <Divider />
    <ToolButton aria-label="Named positions">
      <Icon name="clock" size={13} />
    </ToolButton>
    {toolGroups.map((group) => (
      <React.Fragment key={group[0]}>
        <Divider />
        {group.map((name) => (
          <ToolButton key={name} aria-label={name}>
            <Icon name={name} size={13} />
          </ToolButton>
        ))}
      </React.Fragment>
    ))}
    <ToolSearch>
      Search tools...
      <Key>alt/⌥</Key>
      <Key>c</Key>
    </ToolSearch>
  </Tools>
);

/* ---------- instance tree ---------- */

const Workspace = styled.div`
  display: flex;
  flex: 1;
  min-height: 0;
`;

const Instances = styled.section`
  flex: none;
  width: 129px;
  border-top: 1px solid #d2d2d2;
  border-right: 1px solid #d2d2d2;
`;

const FilterRow = styled.div`
  display: flex;
  align-items: center;
  height: 25px;
  padding: 2px 9px 0 6px;
`;

const FilterInput = styled(SearchInput)`
  height: 19px;
  margin: 0 9px 0 7px;
  padding: 0 3px;
  border: 1px solid #d9d9d9;
  border-radius: 2px;
`;

const TreeRow = styled.div`
  display: flex;
  align-items: center;
  gap: 3px;
  height: ${(props) => (props.$group ? 17 : 16)}px;
  padding: 0 7px 0 ${(props) => props.$indent || 2}px;
  color: #444;
  font-weight: ${(props) => (props.$strong ? 500 : 400)};
  justify-content: ${(props) => (props.$strong ? "space-between" : "flex-start")};
  white-space: nowrap;
`;

const InstanceTree = () => (
  <Instances>
    <FilterRow>
      <Icon name="filter" size={11} />
      <FilterInput aria-label="Filter by name" placeholder="Filter by name" />
      <Icon name="lines" size={11} />
    </FilterRow>
    <TreeRow $strong $group>
      Instances (2)
      <Icon name="folderAdd" size={13} />
    </TreeRow>
    <TreeRow $group>
      <Icon name="assembly" size={11} />
      Pranav Assembly
    </TreeRow>
    <TreeRow $indent={17}>
      <Icon name="origin" size={8} />
      Origin
    </TreeRow>
    <TreeRow $indent={14}>
      <Icon name="part" size={11} />
      Part 1 &lt;1&gt;
      <Icon name="mate" size={10} />
    </TreeRow>
    <TreeRow $indent={14}>
      <Icon name="part" size={11} />
      Part 1 &lt;2&gt;
      <Icon name="mate" size={10} />
    </TreeRow>
    {["Items (0)", "Loads (0)", "Mate features (0)"].map((label) => (
      <TreeRow key={label} $group>
        <Icon name="chevron" size={8} />
        {label}
      </TreeRow>
    ))}
  </Instances>
);

/* ---------- 3D view ---------- */

const Viewport = styled.section`
  position: relative;
  flex: 1;
  min-width: 0;
`;

const Scene = styled.svg`
  display: block;
  width: 100%;
  height: 100%;
`;

const Flap = styled(IconButton)`
  position: absolute;
  top: calc(50% - 16px);
  left: -1px;
  width: 20px;
  height: 21px;
  border: 1px solid #ddd;
  border-left-color: #fff;
  background: #fff;
`;

const ViewCube = styled.svg`
  position: absolute;
  top: 5px;
  right: 0;
  width: 104px;
  height: 104px;
  font-size: 9px;
`;

const Tray = styled.div`
  position: absolute;
  top: calc(50% - 68px);
  right: 0;
  width: 17px;
  border: 1px solid #ccc;
  border-right: 0;
  border-bottom: 0;
  background: #fff;
`;

const TrayButton = styled(IconButton)`
  width: 17px;
  height: 21px;
  border-bottom: 1px solid #ccc;
`;

const Readouts = styled.div`
  position: absolute;
  right: 0;
  bottom: 0;
  display: flex;
  gap: 1px;
`;

const bars = [
  { x: 303, y: 438 },
  { x: 441, y: 487 },
];

const View3D = () => (
  <Viewport aria-label="Model view">
    <Scene viewBox="0 0 1207 715">
      {bars.map((bar) => (
        <g key={bar.x} transform={`translate(${bar.x} ${bar.y})`} strokeLinejoin="round">
          <path d="M1 0l132 47-5 14L-4 14.500z" fill="#6d899e" stroke="#37424b" strokeWidth="1" />
          <path d="M1 .8l131 46.700" stroke="#38444d" strokeWidth="2.600" />
          <path d="M132 47.500l-4.500 13.500" stroke="#111a20" strokeWidth="2.400" />
        </g>
      ))}
      <circle cx="573" cy="568" r="2.600" fill="#999" stroke="#333" strokeWidth="1.500" />
    </Scene>
    <Flap aria-label="Collapse tree" $color="#888">
      <Icon name="tree" size={12} />
    </Flap>
    <ViewCube viewBox="0 0 104 104">
      <g fill="#dfe5ec">
        <path d="M50 5l4 6h-8zM50 98l4-6h-8zM3 52l6-4v8zM97 52l-6-4v8z" />
        <path d="M16 17v9l8-1zM84 17v9l-8-1z" />
      </g>
      <path d="M19 23q6-9 17-12M81 23q-6-9-17-12" fill="none" stroke="#dfe5ec" strokeWidth="3" />
      <g transform="rotate(17 46 54)">
        <rect x="28" y="37" width="36" height="36" rx="8" fill="#e1e7ee" />
        <rect x="34" y="42" width="24" height="26" rx="7" fill="#fff" />
        <g fill="#fff" stroke="#e1e7ee">
          <ellipse cx="32" cy="39" rx="3" ry="5" />
          <ellipse cx="61" cy="41" rx="5" ry="4" />
          <ellipse cx="32" cy="69" rx="3" ry="5" />
          <ellipse cx="60" cy="71" rx="5" ry="3" />
        </g>
      </g>
      <text transform="translate(47 62) rotate(-75)" fill="#333" fontWeight="500" fontSize="9">
        Back
      </text>
      <path d="M53 34l4-1 1 3 3-1" stroke="#777" fill="none" />
      <path d="M43 25l34 12" stroke="#4a5fd8" />
      <path d="M77 37L67 71" stroke="#cf4436" />
      <path d="M71 46l-7 22" stroke="#777" />
      <path d="M77 37l-9 5" stroke="#4f9a55" strokeWidth="1.500" />
      <text x="35" y="26" fill="#4050dd" fontWeight="500">
        Z
      </text>
      <text x="65" y="46" fill="#3f9a48" fontWeight="500">
        Y
      </text>
      <text x="62" y="81" fill="#cf4436" fontWeight="500">
        X
      </text>
      <path d="M73 88l6-2.500 5 2v7l-5 3-6-2.500z" fill="#aaa" stroke="#777" />
      <path d="M73 88l6-2.500 5 2-5 2.500z" fill="#e4e4e4" stroke="#777" strokeWidth=".5" />
      <path d="M79 90l5-2.500v7l-5 3z" fill="#777" />
      <path d="M90 91h5l-2.500 3z" fill="#333" />
    </ViewCube>
    <Tray>
      {["props", "appearance", "config", "measure", "section", "variable"].map((name) => (
        <TrayButton key={name} aria-label={name}>
          <Icon name={name} size={13} />
        </TrayButton>
      ))}
    </Tray>
    <Readouts>
      <IconButton aria-label="Mass" $color="#555">
        <Icon name="mass" size={11} />
      </IconButton>
      <IconButton aria-label="Angle" $color="#555">
        <Icon name="protractor" size={13} />
      </IconButton>
      <IconButton aria-label="Balance" $color="#555">
        <Icon name="scale" size={10} />
      </IconButton>
    </Readouts>
  </Viewport>
);

/* ---------- document tabs ---------- */

const TabBar = styled.nav`
  display: flex;
  flex: none;
  height: 18px;
  border-top: 1px solid #d2d2d2;
  background: #d6d6d6;
`;

const AddTab = styled(IconButton)`
  width: 25px;
  height: 17px;
  padding-right: 5px;
`;

const Tab = styled.button`
  display: flex;
  align-items: center;
  gap: 2px;
  width: 126px;
  padding: 0 3px 0 6px;
  border: 0;
  border-right: 1px solid #c4c4c4;
  border-bottom: 2px solid ${(props) => (props.$active ? "#5c7dc4" : "#e8e8e8")};
  background: ${(props) => (props.$active ? "#fff" : "#e8e8e8")};
  color: ${(props) => (props.$active ? "#333" : "#666")};
  white-space: nowrap;
`;

const TabLabel = styled.span`
  flex: 1;
  text-align: left;
`;

const UserStack = styled.span`
  width: 13px;
  height: 13px;
  background: linear-gradient(#6fcfa8 50%, #3f88ec 50%);
`;

const tabs = [
  { label: "Lewis Part Studio", icon: "studio" },
  { label: "Adam Part Studio", icon: "studio" },
  { label: "Pranav Part Studio", icon: "studio" },
  { label: "Pranav Assembly", icon: "assembly", active: true },
  { label: "Lewis Assembly", icon: "assembly", users: <UserStack /> },
  {
    label: "Adam Assembly",
    icon: "assembly",
    users: (
      <UserBadge $size={14} $bg="#ad8cbb">
        A
      </UserBadge>
    ),
  },
];

export default function App() {
  return (
    <Page>
      <GlobalStyle />
      <Header />
      <Body>
        <Rail>
          {railItems.map(([name, label], i) => (
            <RailButton key={name} aria-label={label} $active={i === 0}>
              <Icon name={name} size={13} />
            </RailButton>
          ))}
          <RailButton aria-label="Feedback">
            <Icon name="feedback" size={12} />
          </RailButton>
        </Rail>
        <HistoryPanel />
        <Main>
          <Toolbar />
          <Workspace>
            <InstanceTree />
            <View3D />
          </Workspace>
          <TabBar>
            <AddTab aria-label="Add tab">
              <Icon name="plus" size={10} />
            </AddTab>
            {tabs.map((tab) => (
              <Tab key={tab.label} $active={tab.active}>
                <Icon name={tab.icon} size={12} />
                <TabLabel>{tab.label}</TabLabel>
                {tab.users}
              </Tab>
            ))}
          </TabBar>
        </Main>
      </Body>
    </Page>
  );
}
